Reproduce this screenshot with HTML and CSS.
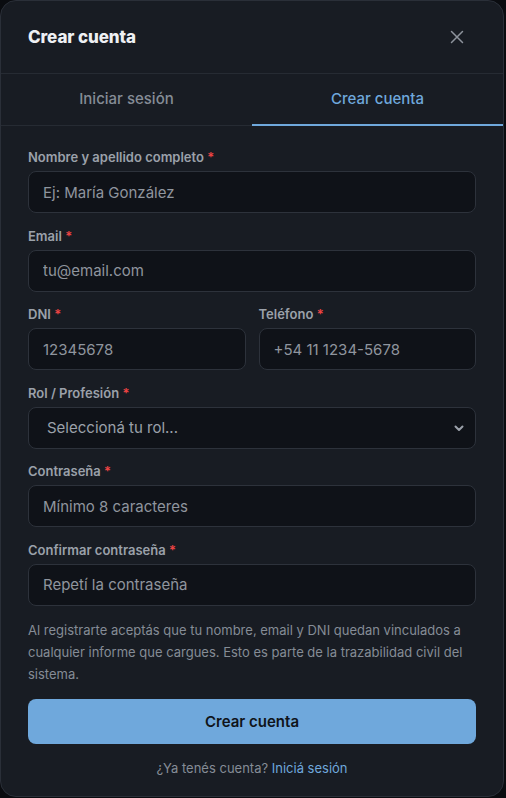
FILE: index.html
```html
<!DOCTYPE html>
<html lang="es">
<head>
<meta charset="utf-8">
<title>Crear cuenta</title>
<link rel="stylesheet" href="styles.css">
</head>
<body>
<div class="modal">
  <div class="header">
    <h2 class="title">Crear cuenta</h2>
    <button class="close" aria-label="Cerrar">
      <svg width="16" height="16" viewBox="0 0 16 16" fill="none" stroke="currentColor" stroke-width="1.5" stroke-linecap="round"><path d="M2.5 2.5l11 11M13.5 2.5l-11 11"/></svg>
    </button>
  </div>
  <div class="tabs">
    <div class="tab">Iniciar sesión</div>
    <div class="tab active">Crear cuenta</div>
  </div>
  <form class="form">
    <div class="field">
      <label class="label">Nombre y apellido completo <span class="req">*</span></label>
      <input class="input" type="text" placeholder="Ej: María González">
    </div>
    <div class="field">
      <label class="label">Email <span class="req">*</span></label>
      <input class="input" type="email" placeholder="tu@email.com">
    </div>
    <div class="row">
      <div class="field">
        <label class="label">DNI <span class="req">*</span></label>
        <input class="input" type="text" placeholder="12345678">
      </div>
      <div class="field">
        <label class="label">Teléfono <span class="req">*</span></label>
        <input class="input" type="text" placeholder="+54 11 1234-5678">
      </div>
    </div>
    <div class="field">
      <label class="label">Rol / Profesión <span class="req">*</span></label>
      <div class="select">
        <span>Seleccioná tu rol...</span>
        <svg class="chev" width="12" height="12" viewBox="0 0 12 12" fill="none" stroke="currentColor" stroke-width="2" stroke-linecap="round" stroke-linejoin="round"><path d="M2.5 4.5L6 8l3.5-3.5"/></svg>
      </div>
    </div>
    <div class="field">
      <label class="label">Contraseña <span class="req">*</span></label>
      <input class="input" type="password" placeholder="Mínimo 8 caracteres">
    </div>
    <div class="field">
      <label class="label">Confirmar contraseña <span class="req">*</span></label>
      <input class="input" type="password" placeholder="Repetí la contraseña">
    </div>
    <p class="notice">Al registrarte aceptás que tu nombre, email y DNI quedan vinculados a cualquier informe que cargues. Esto es parte de la trazabilidad civil del sistema.</p>
    <button class="submit" type="button">Crear cuenta</button>
    <p class="footer">¿Ya tenés cuenta? <a class="link">Iniciá sesión</a></p>
  </form>
</div>
</body>
</html>
```
FILE: styles.css
```css
* { box-sizing: border-box; }
html, body { margin: 0; padding: 0; }
body {
  background: #0a0c10;
  font-family: Inter, "Noto Sans", "Liberation Sans", sans-serif;
  width: 506px;
  height: 798px;
  overflow: hidden;
}
.modal {
  width: 504px;
  height: 797px;
  background: #181c23;
  border: 1px solid #2a2f38;
  border-radius: 16px;
  display: flex;
  flex-direction: column;
  overflow: hidden;
}
.header {
  height: 73px;
  padding: 0 28px 0 27px;
  display: flex;
  align-items: center;
  justify-content: space-between;
  border-bottom: 1px solid #262b33;
  flex-shrink: 0;
}
.title {
  margin: 0;
  font-size: 17px;
  font-weight: 800;
  color: #eef0f3;
  letter-spacing: -0.1px;
}
.close {
  background: none;
  border: 0;
  padding: 0;
  width: 16px;
  height: 16px;
  color: #8d939c;
  margin-right: 10px;
  display: flex;
}
.tabs {
  display: flex;
  height: 52px;
  border-bottom: 1px solid #262b33;
  flex-shrink: 0;
}
.tab {
  flex: 1;
  display: flex;
  align-items: center;
  justify-content: center;
  font-size: 15px;
  font-weight: 500;
  color: #858c96;
  border-bottom: 2px solid transparent;
  margin-bottom: -1px;
  padding-bottom: 1px;
}
.tab.active {
  color: #6fa8dc;
  border-bottom-color: #6fa8dc;
}
.form {
  padding: 22px 27px 0 27px;
  display: flex;
  flex-direction: column;
  gap: 13.5px;
}
.field {
  display: flex;
  flex-direction: column;
  gap: 4px;
  min-width: 0;
}
.row {
  display: grid;
  grid-template-columns: 1fr 1fr;
  gap: 13px;
}
.label {
  font-size: 13px;
  line-height: 19px;
  font-weight: 600;
  color: #9ba1aa;
}
.req { color: #ef4444; }
.input, .select {
  height: 42px;
  width: 100%;
  background: #0f1218;
  border: 1px solid #2d323b;
  border-radius: 8px;
  padding: 0 14px;
  font-family: inherit;
  font-size: 15px;
  color: #e5e7eb;
  outline: none;
}
.input::placeholder { color: #8f959e; }
.select {
  display: flex;
  align-items: center;
  justify-content: space-between;
  padding: 0 10px 0 18px;
  color: #9ba1aa;
}
.chev { color: #9ba1aa; }
.notice {
  margin: 0;
  font-size: 13px;
  line-height: 22px;
  color: #858c96;
}
.submit {
  height: 45px;
  border: 0;
  border-radius: 8px;
  background: #6fa8dc;
  color: #10141a;
  font-family: inherit;
  font-size: 15px;
  font-weight: 600;
  margin-top: 0;
}
.footer {
  margin: 1px 0 0;
  text-align: center;
  font-size: 13px;
  line-height: 20px;
  color: #858c96;
}
.link { color: #6fa8dc; }
```
